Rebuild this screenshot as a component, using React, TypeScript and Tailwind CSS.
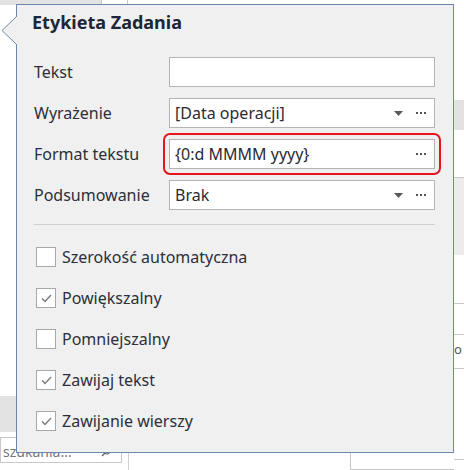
import React from "react";

const font = { fontFamily: '"Noto Sans", "DejaVu Sans", sans-serif' };

type Field = {
  label: string;
  value: string;
  combo?: boolean;
  dots?: boolean;
  marked?: boolean;
};

const fields: Field[] = [
  { label: "Tekst", value: "" },
  { label: "Wyrażenie", value: "[Data operacji]", combo: true, dots: true },
  { label: "Format tekstu", value: "{0:d MMMM yyyy}", dots: true, marked: true },
  { label: "Podsumowanie", value: "Brak", combo: true, dots: true },
];

const options = [
  { label: "Szerokość automatyczna", checked: false },
  { label: "Powiększalny", checked: true },
  { label: "Pomniejszalny", checked: false },
  { label: "Zawijaj tekst", checked: true },
  { label: "Zawijanie wierszy", checked: true },
];

function Editor({ f }: { f: Field }) {
  const box = (
    <div className="flex h-[30px] w-[266px] items-center border border-[#b4b4b4] bg-white pl-[5px] pr-[8px] text-[16px] text-[#2a2a35]">
      <span className="flex-1 truncate">{f.value}</span>
      {f.combo && (
        <svg width="9" height="5" viewBox="0 0 9 5" className="mr-[13px]">
          <path d="M0 0h9L4.5 5z" fill="#5a5a5a" />
        </svg>
      )}
      {f.dots && (
        <span className="flex gap-[2px]">
          <i className="h-[2px] w-[2px] bg-[#555]" />
          <i className="h-[2px] w-[2px] bg-[#555]" />
          <i className="h-[2px] w-[2px] bg-[#555]" />
        </span>
      )}
    </div>
  );
  if (!f.marked) return box;
  return (
    <div className="-m-[6px] rounded-[7px] border-2 border-[#e8141c] p-[4px]">{box}</div>
  );
}

function Check({ checked }: { checked: boolean }) {
  return (
    <div className="flex h-[20px] w-[20px] items-center justify-center border border-[#a8a8a8] bg-white">
      {checked && (
        <svg width="11" height="9" viewBox="0 0 11 9">
          <path d="M1 4.5l3 3L10 1" fill="none" stroke="#7a7a7a" strokeWidth="1.4" />
        </svg>
      )}
    </div>
  );
}

function Background() {
  return (
    <div className="flex h-full w-full">
      <div className="flex flex-1 flex-col">
        <div className="flex h-[5px]">
          <div className="w-[102px] border-r border-[#c8c8c8] bg-[#e3e3e3]" />
          <div className="w-[26px] border-r border-[#c8c8c8]" />
        </div>
        <div className="flex-1" />
        <div className="h-[36px] w-[16px] bg-[#e3e3e3]" />
        <div className="h-[5px]" />
        <div className="flex h-[33px]">
          <div className="flex h-[26px] w-[122px] items-end justify-between border border-[#c8c8c8] bg-white pb-[1px] pl-[2px] pr-[10px] text-[14px] leading-[18px] text-[#777]">
            <span>szukania...</span>
            <svg width="10" height="10" viewBox="0 0 10 10" className="mb-[4px]">
              <circle cx="6" cy="4" r="3" fill="none" stroke="#666" strokeWidth="1.2" />
              <path d="M4 6L1 9" stroke="#666" strokeWidth="1.4" />
            </svg>
          </div>
          <div className="ml-[6px] w-[222px] border-l border-[#d0d0d0]" />
          <div className="mt-[15px] flex-1 border-l border-b border-[#c8c8c8]" />
        </div>
      </div>
      <div className="flex w-[10px] flex-col">
        <div className="h-[100px]" />
        <div className="h-[30px] bg-[#e2e2e2]" />
        <div className="h-[47px]" />
        <div className="h-[78px] border-t border-[#c8c8c8] bg-[#ececec]" />
        <div className="h-[48px]" />
        <div className="h-[31px] border-t border-[#c8c8c8]" />
        <div className="h-[35px] border-t border-b border-[#c8c8c8] text-[13px] leading-[28px] text-[#555]">o</div>
        <div className="h-[85px]" />
        <div className="h-[6px] border-b border-[#c8c8c8]" />
      </div>
    </div>
  );
}

export default function App() {
  return (
    <div className="relative h-[470px] w-[464px] overflow-hidden bg-white" style={font}>
      <Background />

      {/* popup */}
      <div className="absolute left-[16px] top-[4px] h-[449px] w-[438px] border border-[#6d86ad] bg-[#f0f0f0]">
        <svg
          width="17"
          height="30"
          viewBox="0 0 17 30"
          className="absolute left-[-16px] top-[11px]"
        >
          <path d="M16 0L1 14.5L16 29" fill="#f0f0f0" stroke="#6d86ad" strokeWidth="1" />
        </svg>
        <div className="pl-[15px] pt-[6px] text-[18px] font-bold leading-[22px] text-[#1c2636]">
          Etykieta Zadania
        </div>
        <div className="mt-[24px] flex flex-col gap-[11px] pl-[17px]">
          {fields.map((f) => (
            <div key={f.label} className="flex items-center">
              <span className="w-[135px] text-[16px] text-[#2b2f3a]">{f.label}</span>
              <Editor f={f} />
            </div>
          ))}
        </div>
        <div className="ml-[17px] mt-[14px] h-[1px] w-[401px] bg-[#d0d0d0]" />
        <div className="mt-[22px] flex flex-col gap-[21px] pl-[19px]">
          {options.map((o) => (
            <div key={o.label} className="flex items-center gap-[6px]">
              <Check checked={o.checked} />
              <span className="text-[16px] leading-[20px] text-[#2b2f3a]">{o.label}</span>
            </div>
          ))}
        </div>
      </div>
    </div>
  );
}
